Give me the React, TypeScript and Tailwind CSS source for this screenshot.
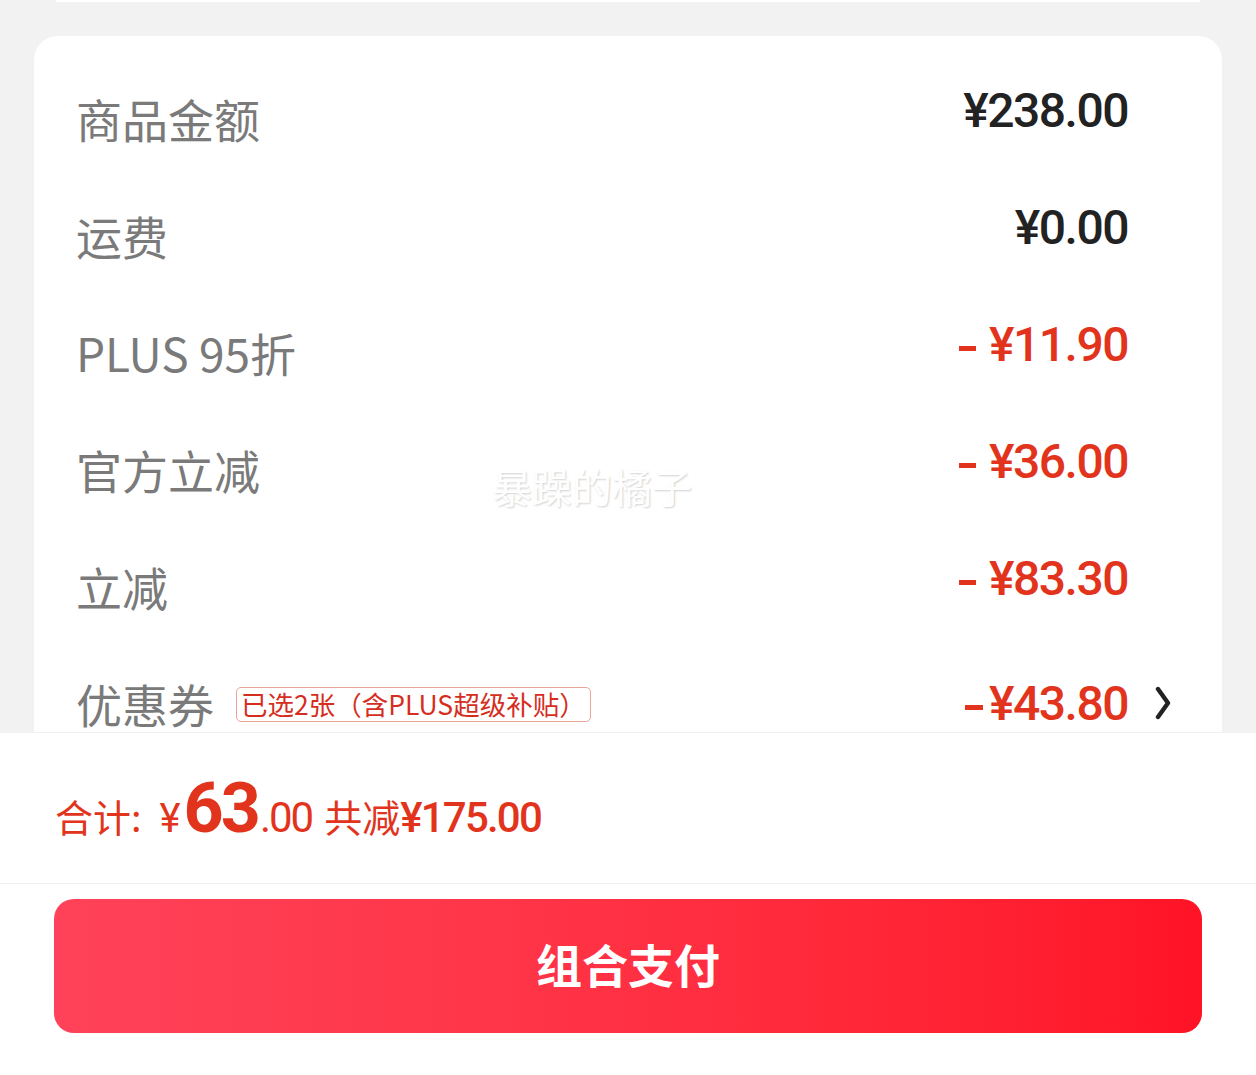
import React from "react";

const CJK = "font-['Noto_Sans_CJK_SC','Noto_Sans',sans-serif]";
const NUM = "font-['Roboto','Noto_Sans_CJK_SC',sans-serif]";

type Row = {
  label: string;
  value: string;
  dash?: "spaced" | "tight";
  tag?: string;
  chevron?: boolean;
};

const rows: Row[] = [
  { label: "商品金额", value: "¥238.00" },
  { label: "运费", value: "¥0.00" },
  { label: "PLUS 95折", value: "¥11.90", dash: "spaced" },
  { label: "官方立减", value: "¥36.00", dash: "spaced" },
  { label: "立减", value: "¥83.30", dash: "spaced" },
  { label: "优惠券", value: "¥43.80", dash: "tight", tag: "已选2张（含PLUS超级补贴）", chevron: true },
];

function Chevron() {
  return (
    <svg width="16" height="34" viewBox="0 0 16 34" className="block">
      <polyline
        points="3,3 13,17 3,31"
        fill="none"
        stroke="#222222"
        strokeWidth="4.4"
        strokeLinecap="round"
        strokeLinejoin="round"
      />
    </svg>
  );
}

export default function App() {
  return (
    <div className="relative w-[1256px] h-[1075px] overflow-hidden bg-[#f2f2f2] flex flex-col">
      <div className="ml-[56px] w-[1144px] h-[2px] bg-white shrink-0" />
      <div className="mt-[34px] ml-[34px] w-[1188px] h-[696px] shrink-0 overflow-hidden rounded-t-[24px] bg-white pt-[59px]">
        {rows.map((r, i) => (
          <div key={i} className="flex items-start h-[117px] pl-[42px] pr-[51px]">
            <div className={`${CJK} flex items-center text-[46px] leading-none text-[#7a7a7a]`}>
              <span>{r.label}</span>
              {r.tag && (
                <span className={`${CJK} ml-[22px] mt-[2px] inline-flex h-[35px] items-center rounded-[5px] border border-[#eaa597] px-[4px] text-[26.5px] leading-none text-[#d52e1e]`}>
                  {r.tag}
                </span>
              )}
            </div>
            <div
              className={`${NUM} ml-auto flex items-center text-[48px] leading-none font-medium tracking-[-1.5px] ${
                r.dash ? "text-[#e2341d]" : "text-[#222222]"
              } ${r.chevron ? "mt-0" : "-mt-[8px]"}`}
            >
              {r.dash === "spaced" && <span className="inline-block w-[17px] h-[5px] bg-current mr-[13px] mt-[6px]" />}
              {r.dash === "tight" && <span className="inline-block w-[18px] h-[5px] bg-current mr-[6px] mt-[6px]" />}
              <span>{r.value}</span>
            </div>
            <div className="ml-[27px] w-[16px] mt-[6px]">{r.chevron && <Chevron />}</div>
          </div>
        ))}
      </div>
      <div className="flex-1 bg-white flex flex-col">
        <div className="h-[151px] border-t border-[#f0f0f0] pl-[55px] pt-[40px] flex items-baseline text-[#e2341d]">
          <span className={`${CJK} text-[38px] leading-none`}>合计:</span>
          <span className={`${NUM} ml-[18px] text-[40px] leading-none`}>¥</span>
          <span className={`${NUM} ml-[3px] text-[70px] leading-none font-bold tracking-[-3px]`}>63</span>
          <span className={`${NUM} ml-[2px] text-[42px] leading-none tracking-[-2px]`}>.00</span>
          <span className={`${CJK} ml-[12px] text-[38px] leading-none`}>共减</span>
          <span className={`${NUM} text-[42px] leading-none font-medium tracking-[-1.8px]`}>¥175.00</span>
        </div>
        <div className="h-px bg-[#f0f0f0]" />
        <div className="px-[54px] mt-[15px]">
          <div className="h-[134px] rounded-[20px] bg-gradient-to-r from-[#ff4259] to-[#ff1326] flex items-center justify-center pb-[6px]">
            <span className={`${CJK} text-[46px] font-bold text-white leading-none`}>组合支付</span>
          </div>
        </div>
      </div>
      <div
        className={`${CJK} absolute left-[492px] top-[466px] text-[40px] leading-none text-white [text-shadow:1px_1px_2px_rgba(0,0,0,0.18)]`}
      >
        暴躁的橘子
      </div>
    </div>
  );
}
